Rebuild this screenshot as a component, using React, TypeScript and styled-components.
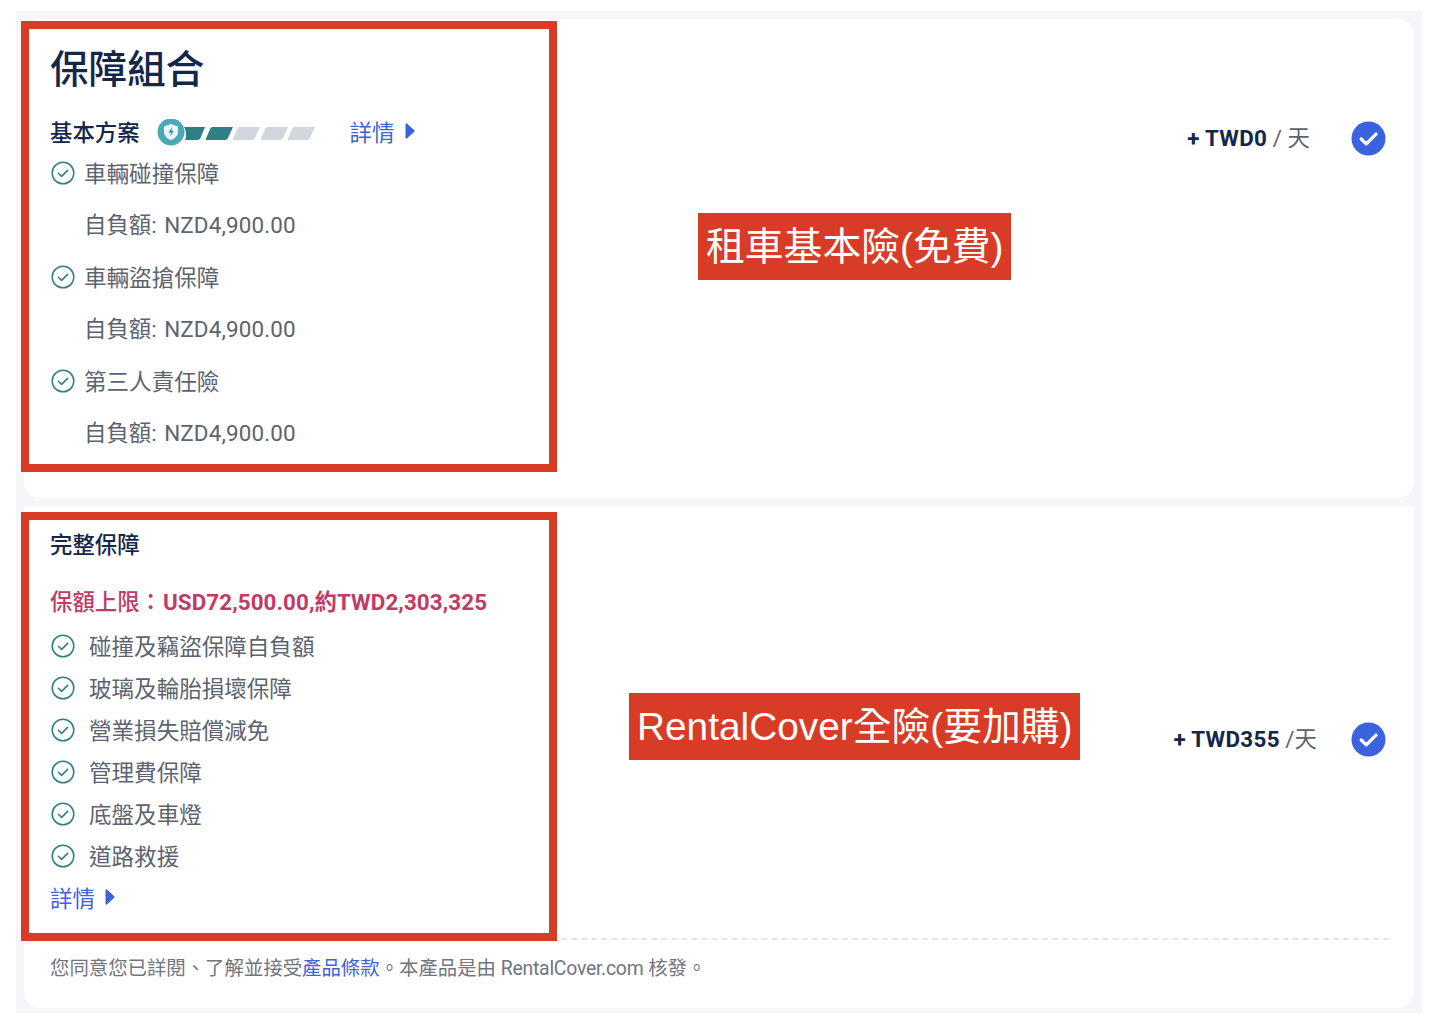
import React from 'react'
import styled, { createGlobalStyle } from 'styled-components'

const Global = createGlobalStyle`
  html, body { margin: 0; padding: 0; background: #fff; }
  body { font-family: Roboto, "Noto Sans CJK TC", sans-serif; }
`
const Page = styled.div`
  position: relative;
  width: 1434px;
  height: 1024px;
  padding: 11px 12px 11px 16px;
  box-sizing: border-box;
`
const Panel = styled.div`
  background: #f5f6fa;
  padding: 8px 8px 5px;
  height: 1002px;
  box-sizing: border-box;
  display: flex;
  flex-direction: column;
  gap: 8px;
`
const Card = styled.section<{ $h: number; $flatTop?: boolean }>`
  flex: none;
  background: #fff;
  height: ${p => p.$h}px;
  box-sizing: border-box;
  border-radius: ${p => (p.$flatTop ? '0 0 16px 16px' : '16px')};
  padding: 0 25px 0 26px;
`
const Main = styled.div<{ $h: number; $dashed?: boolean }>`
  height: ${p => p.$h}px;
  box-sizing: border-box;
  display: flex;
  justify-content: space-between;
  border-bottom: ${p => (p.$dashed ? '2px dashed #e4e6e9' : 'none')};
`
const Info = styled.div`
  display: flex;
  flex-direction: column;
`
const Title = styled.h2`
  margin: 24px 0 0;
  font-size: 38.6px;
  line-height: 54px;
  font-weight: 500;
  color: #14264a;
`
const PlanRow = styled.div`
  display: flex;
  align-items: center;
  margin-top: 18px;
  height: 32px;
`
const PlanName = styled.span`
  font-size: 22.4px;
  font-weight: 500;
  color: #14264a;
  margin-right: 17px;
`
const MeterIcon = styled.svg`
  flex: none;
  margin-top: 3px;
`
const Details = styled.a<{ $left: number; $top: number }>`
  display: inline-flex;
  align-items: center;
  gap: 10.5px;
  margin: ${p => p.$top}px 0 0 ${p => p.$left}px;
  font-size: 22.4px;
  color: #3f62d6;
`
const Feature = styled.div<{ $h: number; $gap: number }>`
  display: flex;
  align-items: center;
  gap: ${p => p.$gap}px;
  height: ${p => p.$h}px;
  box-sizing: border-box;
  padding-bottom: 3px;
  font-size: 22.55px;
  color: #5c6370;
`
const FeatureIcon = styled.svg`
  flex: none;
  margin: 3px 0 0 1px;
`
const Deductible = styled.div`
  height: 52px;
  line-height: 52px;
  padding-left: 34px;
  font-size: 22.4px;
  color: #5c6370;
`
const DeductibleAmount = styled.span`
  margin-left: 2px;
  letter-spacing: 0.15px;
`
const SubTitle = styled.h3`
  margin: 21px 0 0;
  font-size: 22.4px;
  line-height: 36px;
  font-weight: 500;
  color: #14264a;
`
const Limit = styled.div`
  margin: 21px 0 5px;
  font-size: 22.4px;
  line-height: 36px;
  font-weight: 500;
  color: #c23a66;
`
const LimitAmount = styled.span`
  font-weight: 700;
  letter-spacing: 0.08px;
  margin-left: 1px;
`
const Price = styled.div<{ $top: number; $gap: number }>`
  display: flex;
  align-items: center;
  gap: ${p => p.$gap}px;
  height: 36px;
  margin: ${p => p.$top}px 3px 0 0;
`
const Amount = styled.span`
  font-size: 22.4px;
  font-weight: 700;
  letter-spacing: 0.3px;
  color: #14264a;
`
const Unit = styled.span`
  font-size: 22.4px;
  color: #5c6370;
`
const PriceText = styled.div`
  white-space: nowrap;
  padding-bottom: 4px;
`
const Foot = styled.p`
  margin: 15px 0 0;
  font-size: 19.4px;
  line-height: 28px;
  color: #70757e;
`
const FootBrand = styled.span`
  letter-spacing: -0.25px;
`
const TermsLink = styled.a`
  color: #3f62d6;
`
const Frame = styled.div<{ $top: number; $h: number }>`
  position: absolute;
  left: 21px;
  top: ${p => p.$top}px;
  width: 536px;
  height: ${p => p.$h}px;
  border: 8px solid #d93c26;
  box-sizing: border-box;
`
const Note = styled.div<{ $left: number; $top: number }>`
  position: absolute;
  left: ${p => p.$left}px;
  top: ${p => p.$top}px;
  height: 67px;
  line-height: 67px;
  padding: 0 8px;
  background: #d93c26;
  color: #fff;
  font-family: "Liberation Sans", "Noto Sans CJK TC", sans-serif;
  font-size: 38.8px;
  white-space: nowrap;
`

const CheckOutline = () => (
  <FeatureIcon width="24" height="24" viewBox="0 0 24 24" fill="none">
    <circle cx="12" cy="12" r="10.8" stroke="#2f7f86" strokeWidth="1.5" />
    <path d="M7.4 12.2l3.2 3.2 6-6" stroke="#2f7f86" strokeWidth="1.5" strokeLinecap="round" strokeLinejoin="round" />
  </FeatureIcon>
)
const CheckSolid = () => (
  <svg width="35" height="35" viewBox="0 0 36 36" style={{ flex: 'none' }}>
    <circle cx="18" cy="18" r="17.5" fill="#3b63e0" />
    <path d="M10.5 18.5l5.2 5 10-10" fill="none" stroke="#fff" strokeWidth="3.4" strokeLinecap="round" strokeLinejoin="round" />
  </svg>
)
const Arrow = () => (
  <svg width="10" height="16" viewBox="0 0 10 16">
    <path d="M0.5 1.2c0-.8.8-1.2 1.4-.8l7.4 6.8c.4.4.4 1.1 0 1.5l-7.4 6.9c-.6.4-1.4 0-1.4-.8z" fill="#3b63e0" />
  </svg>
)
const Meter = () => (
  <MeterIcon width="158" height="28" viewBox="0 0 158 28">
    <path d="M27 8h21l-4.5 11c-.6 1.200-1.500 2-3 2H28c2-3 1-10-1-13z" fill="#2f7f86" />
    <path d="M56 8h20l-5 11c-.6 1.200-1.600 2-3 2H50c-1 0-1.400-.8-1-1.600l4.200-9.600C53.800 8.600 54.700 8 56 8z" fill="#2f7f86" />
    <path d="M83 8h20l-5 11c-.6 1.200-1.600 2-3 2H77c-1 0-1.400-.8-1-1.600l4.200-9.600C80.800 8.600 81.700 8 83 8z" fill="#d3d6dc" />
    <path d="M111 8h20l-5 11c-.6 1.200-1.600 2-3 2h-18c-1 0-1.400-.8-1-1.600l4.200-9.600c.6-1.200 1.500-1.800 2.800-1.800z" fill="#d3d6dc" />
    <path d="M138 8h20l-5 11c-.6 1.200-1.600 2-3 2h-18c-1 0-1.400-.8-1-1.600l4.200-9.600c.6-1.200 1.500-1.800 2.800-1.800z" fill="#d3d6dc" />
    <circle cx="14" cy="13" r="13.500" fill="#4ba9b6" />
    <path d="M14 5l7 2.500v5.500c0 3.800-2.900 6.500-7 8.100-4.100-1.600-7-4.300-7-8.100V7.500z" fill="#e9f5f7" />
    <path d="M15.300 7.800l-4 5.700h2.600l-1 4 4-5.700h-2.600z" fill="#3a8f9b" />
  </MeterIcon>
)

type RowProps = { label: string }
const BaseCover = ({ label }: RowProps) => (
  <>
    <Feature $h={52} $gap={9}><CheckOutline />{label}</Feature>
    <Deductible>自負額: <DeductibleAmount>NZD4,900.00</DeductibleAmount></Deductible>
  </>
)

const fullCover = ['碰撞及竊盜保障自負額', '玻璃及輪胎損壞保障', '營業損失賠償減免', '管理費保障', '底盤及車燈', '道路救援']

export default function App() {
  return (
    <Page>
      <Global />
      <Panel>
        <Card $h={479}>
          <Main $h={479}>
            <Info>
              <Title>保障組合</Title>
              <PlanRow>
                <PlanName>基本方案</PlanName>
                <Meter />
                <Details $left={35} $top={0}>詳情<Arrow /></Details>
              </PlanRow>
              <BaseCover label="車輛碰撞保障" />
              <BaseCover label="車輛盜搶保障" />
              <BaseCover label="第三人責任險" />
            </Info>
            <Price $top={101} $gap={41}>
              <PriceText><Amount>+ TWD0</Amount><Unit> / 天</Unit></PriceText>
              <CheckSolid />
            </Price>
          </Main>
        </Card>
        <Card $h={502} $flatTop>
          <Main $h={434} $dashed>
            <Info>
              <SubTitle>完整保障</SubTitle>
              <Limit>保額上限：<LimitAmount>USD72,500.00,約TWD2,303,325</LimitAmount></Limit>
              {fullCover.map(item => (
                <Feature key={item} $h={42} $gap={14}><CheckOutline />{item}</Feature>
              ))}
              <Details $left={0} $top={4}>詳情<Arrow /></Details>
            </Info>
            <Price $top={215} $gap={34}>
              <PriceText><Amount>+ TWD355</Amount><Unit> /天</Unit></PriceText>
              <CheckSolid />
            </Price>
          </Main>
          <Foot>您同意您已詳閱、了解並接受<TermsLink>產品條款</TermsLink>。本產品是由 <FootBrand>RentalCover.com</FootBrand> 核發。</Foot>
        </Card>
      </Panel>
      <Frame $top={21} $h={451} />
      <Frame $top={512} $h={429} />
      <Note $left={698} $top={213}>租車基本險(免費)</Note>
      <Note $left={629} $top={693}>RentalCover全險(要加購)</Note>
    </Page>
  )
}
